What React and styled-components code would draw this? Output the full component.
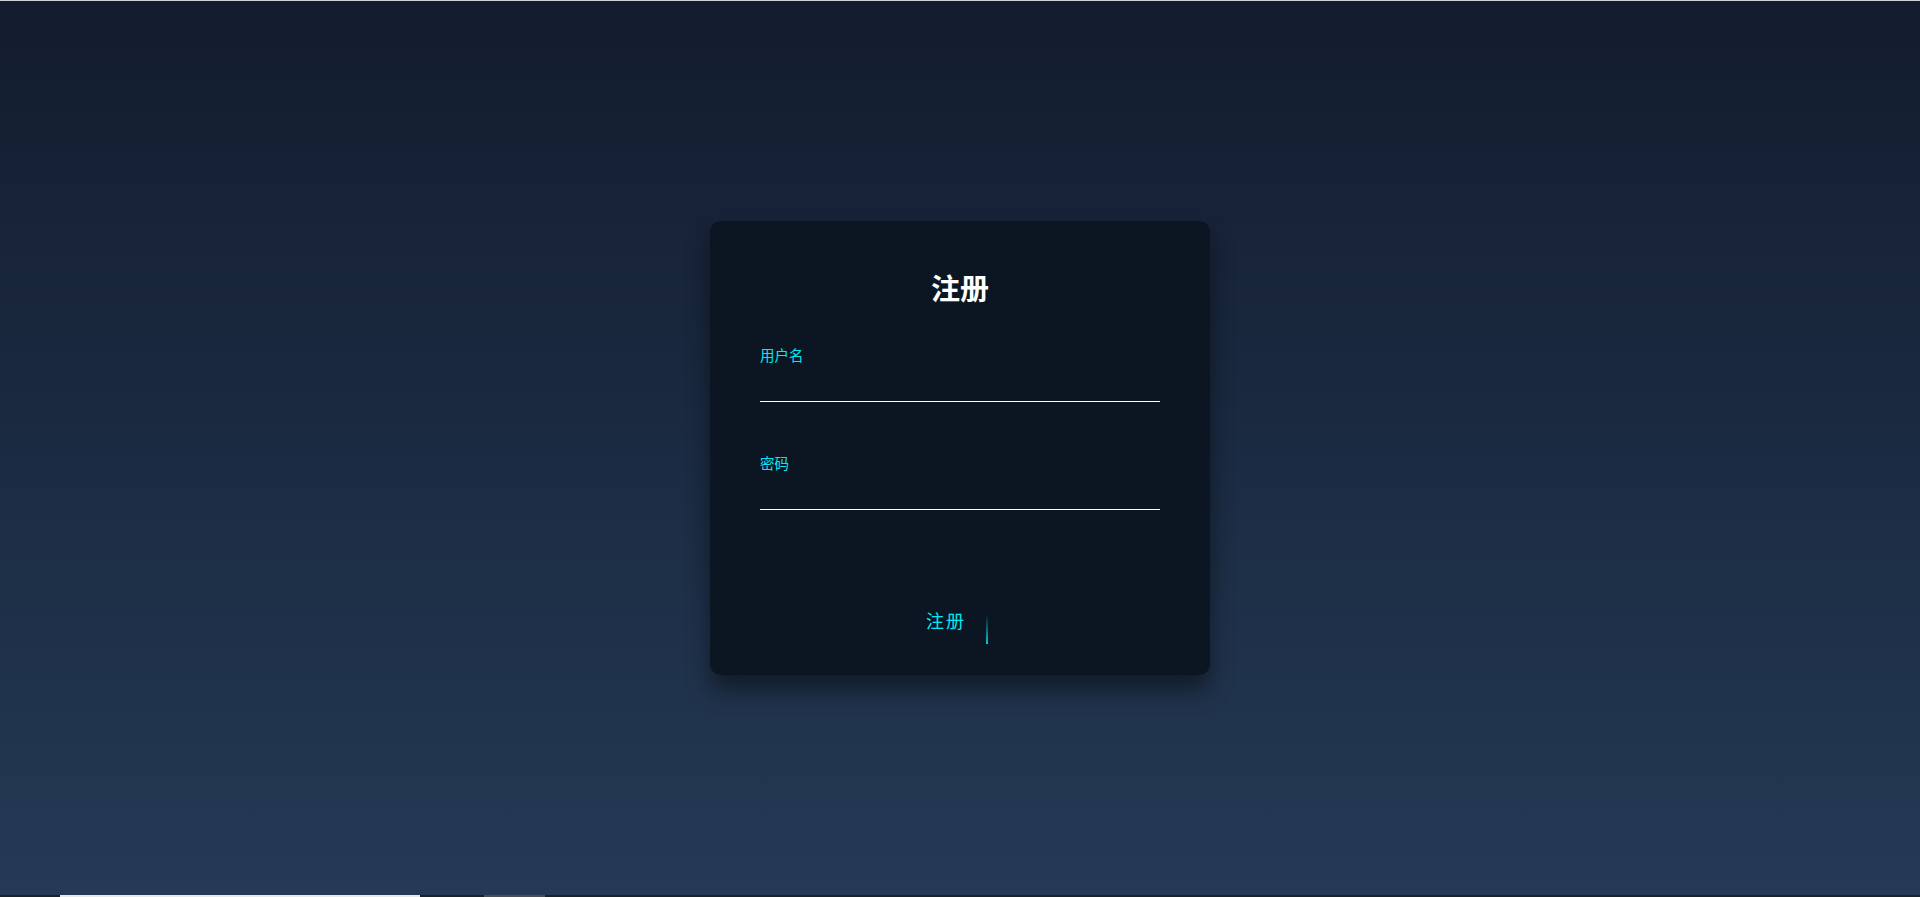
import React from "react";
import styled, { createGlobalStyle } from "styled-components";

const GlobalStyle = createGlobalStyle`
  html, body {
    margin: 0;
    padding: 0;
    height: 100%;
  }
  body {
    font-family: "Noto Sans CJK SC", "Noto Sans", sans-serif;
    background: #141c2e;
  }
  #root {
    height: 100%;
  }
`;

const Page = styled.div`
  height: 100vh;
  box-sizing: border-box;
  border-top: 1px solid #cfd2d6;
  display: flex;
  flex-direction: column;
  background: linear-gradient(180deg, #131c2e 0%, #1a2940 45%, #243a55 100%);
`;

const Main = styled.main`
  flex: 1;
  display: flex;
  align-items: center;
  justify-content: center;
`;

const Card = styled.form`
  width: 500px;
  box-sizing: border-box;
  padding: 48px 50px 31px;
  background: #0b1622;
  border-radius: 11px;
  box-shadow: 0 15px 25px rgba(0, 0, 0, 0.45);
`;

const Title = styled.h2`
  margin: 0 0 40px;
  text-align: center;
  color: #ffffff;
  font-size: 29px;
  line-height: 36px;
  font-weight: 700;
  font-family: "Noto Sans CJK SC", serif;
`;

const Field = styled.div`
  display: flex;
  flex-direction: column;
  margin-bottom: ${(p) => p.$gap || 51}px;
`;

const Label = styled.label`
  color: #03e9f4;
  font-size: 14.5px;
  line-height: 20px;
`;

const Input = styled.input`
  height: 36px;
  padding: 0;
  border: none;
  border-bottom: 1px solid #ffffff;
  background: transparent;
  outline: none;
  color: #ffffff;
  font-size: 16px;
  font-family: inherit;
`;

const Actions = styled.div`
  display: flex;
  justify-content: center;
  padding-top: 38px;
`;

const Button = styled.a`
  position: relative;
  overflow: hidden;
  display: inline-block;
  margin-right: 28px;
  padding: 10px 22px 13px;
  color: #03e9f4;
  font-size: 18px;
  line-height: 22px;
  letter-spacing: 2px;
  text-decoration: none;
  cursor: pointer;
`;

const Sweep = styled.span`
  position: absolute;
  right: 0;
  bottom: 0;
  width: 2px;
  height: 29px;
  background: linear-gradient(180deg, transparent, #03c8d6);
`;

const Strip = styled.div`
  height: 2px;
  display: flex;
  align-items: stretch;
  background: #1b2129;
`;

const StripBar = styled.div`
  margin-left: ${(p) => p.$left}px;
  width: ${(p) => p.$width}px;
  background: ${(p) => p.$color};
`;

export default function App() {
  return (
    <>
      <GlobalStyle />
      <Page>
        <Main>
          <Card onSubmit={(e) => e.preventDefault()}>
            <Title>注册</Title>
            <Field>
              <Label htmlFor="username">用户名</Label>
              <Input id="username" type="text" />
            </Field>
            <Field $gap={0}>
              <Label htmlFor="password">密码</Label>
              <Input id="password" type="password" />
            </Field>
            <Actions>
              <Button>
                注册
                <Sweep />
              </Button>
            </Actions>
          </Card>
        </Main>
        <Strip>
          <StripBar $left={60} $width={360} $color="#e6e8ea" />
          <StripBar $left={64} $width={61} $color="#4a4f57" />
        </Strip>
      </Page>
    </>
  );
}
